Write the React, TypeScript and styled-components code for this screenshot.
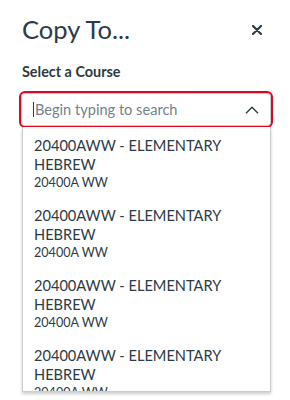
import React from "react";
import styled, { createGlobalStyle } from "styled-components";

const courses = [
  { name: "20400AWW - ELEMENTARY HEBREW", code: "20400A WW" },
  { name: "20400AWW - ELEMENTARY HEBREW", code: "20400A WW" },
  { name: "20400AWW - ELEMENTARY HEBREW", code: "20400A WW" },
  { name: "20400AWW - ELEMENTARY HEBREW", code: "20400A WW" },
];

const App: React.FC = () => {
  return (
    <>
      <GlobalStyle />
      <Tray>
        <Header>
          <Title>Copy To...</Title>
          <CloseButton aria-label="Close">
            <svg width="10" height="10" viewBox="0 0 10 10">
              <path d="M1 1 L9 9 M9 1 L1 9" stroke="#2d3b45" strokeWidth="2.2" strokeLinecap="round" />
            </svg>
          </CloseButton>
        </Header>
        <Label>Select a Course</Label>
        <SearchBox>
          <Caret />
          <Placeholder>Begin typing to search</Placeholder>
          <svg width="14" height="8" viewBox="0 0 14 8">
            <path d="M1 7.2 L7 1.2 L13 7.2" fill="none" stroke="#2d3b45" strokeWidth="1.4" />
          </svg>
        </SearchBox>
        <Menu>
          {courses.map((c, i) => (
            <Option key={i}>
              <OptionName>{c.name}</OptionName>
              <OptionCode>{c.code}</OptionCode>
            </Option>
          ))}
        </Menu>
      </Tray>
    </>
  );
};

export default App;

const GlobalStyle = createGlobalStyle`
  body {
    margin: 0;
    background: #fff;
    font-family: Lato, "Liberation Sans", sans-serif;
    color: #2d3b45;
  }
`;

const Tray = styled.div`
  width: 290px;
  height: 400px;
  padding: 0 19px 0 22px;
  box-sizing: border-box;
  overflow: hidden;
`;

const Header = styled.div`
  display: flex;
  justify-content: space-between;
  align-items: center;
  padding-top: 13px;
  height: 32px;
`;

const Title = styled.h1`
  margin: 0;
  font-size: 25.5px;
  font-weight: 400;
  line-height: 32px;
`;

const CloseButton = styled.button`
  border: none;
  background: none;
  padding: 0;
  margin: 2px 9px 0 0;
  display: flex;
  cursor: pointer;
`;

const Label = styled.div`
  margin-top: 18px;
  font-size: 14.4px;
  font-weight: 700;
  line-height: 17px;
`;

const SearchBox = styled.div`
  display: flex;
  align-items: center;
  margin: 11px -2px 0 -3px;
  height: 37px;
  box-sizing: border-box;
  border: 2px solid #e0061f;
  border-radius: 6px;
  padding: 0 12px 0 12px;
  box-shadow: inset 0 0 0 1px #c7cdd1;
`;

const Caret = styled.span`
  width: 1px;
  height: 15px;
  background: #2d3b45;
`;

const Placeholder = styled.span`
  flex: 1;
  margin-left: 1px;
  font-size: 14.6px;
  color: #73818c;
`;

const Menu = styled.div`
  margin-top: -1px;
  width: 249px;
  height: 265px;
  box-sizing: border-box;
  border: 1px solid #c7cdd1;
  border-top: none;
  background: #fff;
  box-shadow: 0 2px 3px rgba(0, 0, 0, 0.2);
  overflow: hidden;
`;

const Option = styled.div`
  padding: 9px 10px 6px 11px;
`;

const OptionName = styled.div`
  font-size: 14.6px;
  line-height: 19px;
`;

const OptionCode = styled.div`
  font-size: 12.6px;
  line-height: 17px;
`;
